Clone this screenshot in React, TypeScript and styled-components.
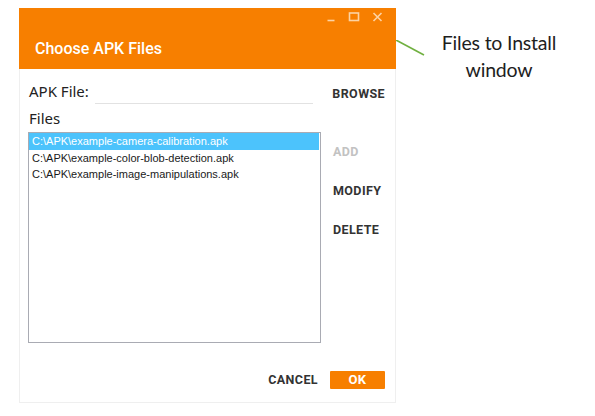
import React from "react";
import styled, { createGlobalStyle } from "styled-components";

const GlobalStyle = createGlobalStyle`
  html, body {
    margin: 0;
    padding: 0;
    background: #ffffff;
  }
  body {
    font-family: Roboto, "Liberation Sans", Arial, sans-serif;
  }
`;

const Page = styled.div`
  display: flex;
  align-items: flex-start;
  width: 595px;
  height: 416px;
  padding: 8px 0 0 19px;
  box-sizing: border-box;
`;

const Window = styled.div`
  width: 377px;
  display: flex;
  flex-direction: column;
  background: #ffffff;
  border: 1px solid #efefef;
  border-top: none;
  box-sizing: border-box;
`;

const Header = styled.div`
  height: 61px;
  background: #f77f00;
  display: flex;
  flex-direction: column;
  margin: 0 -1px;
`;

const Controls = styled.div`
  display: flex;
  justify-content: flex-end;
  align-items: center;
  gap: 12px;
  height: 14px;
  padding: 2px 13px 0 0;
`;

const Title = styled.div`
  margin-top: 15px;
  padding-left: 16px;
  color: #ffffff;
  font-size: 16px;
  font-weight: 500;
  line-height: 19px;
`;

const Body = styled.div`
  display: flex;
  flex-direction: column;
  padding: 0 10px 13px 8px;
`;

const FileRow = styled.div`
  display: flex;
  align-items: flex-end;
  height: 35px;
  padding-left: 1px;
`;

const FieldLabel = styled.span`
  width: 61px;
  font-family: "Noto Sans", "Open Sans", sans-serif;
  font-size: 15px;
  line-height: 18px;
  color: #222222;
  margin-bottom: 4px;
  white-space: nowrap;
`;

const TextInput = styled.div`
  width: 220px;
  height: 20px;
  margin-left: 5px;
  border-bottom: 1px solid #e2e2e2;
`;

const ActionButton = styled.span<{ $disabled?: boolean }>`
  font-size: 12.5px;
  font-weight: 700;
  line-height: 14px;
  letter-spacing: 0.4px;
  color: ${(p) => (p.$disabled ? "#c2c2c2" : "#333333")};
  cursor: ${(p) => (p.$disabled ? "default" : "pointer")};
`;

const BrowseButton = styled(ActionButton)`
  margin-left: 19px;
  margin-bottom: 3px;
`;

const SectionLabel = styled.div`
  margin-top: 5px;
  padding-left: 1px;
  font-family: "Noto Sans", "Open Sans", sans-serif;
  font-size: 15px;
  line-height: 18px;
  color: #222222;
`;

const ListRow = styled.div`
  display: flex;
  margin-top: 5px;
`;

const FileList = styled.ul`
  list-style: none;
  margin: 0;
  width: 293px;
  height: 211px;
  padding: 0 1px 0 0;
  box-sizing: border-box;
  border: 1px solid #a9abb3;
  font-family: "Liberation Sans", Arial, sans-serif;
  font-size: 11px;
`;

const FileItem = styled.li<{ $selected?: boolean }>`
  height: 16.5px;
  line-height: 16.5px;
  padding-left: 3px;
  white-space: nowrap;
  color: ${(p) => (p.$selected ? "#ffffff" : "#1a1a1a")};
  background: ${(p) => (p.$selected ? "#4cc3fc" : "transparent")};
`;

const SideButtons = styled.div`
  display: flex;
  flex-direction: column;
  gap: 25px;
  margin: 13px 0 0 12px;
`;

const Footer = styled.div`
  display: flex;
  justify-content: flex-end;
  align-items: center;
  gap: 12px;
  margin-top: 28px;
`;

const OkButton = styled.span`
  width: 55px;
  height: 18px;
  background: #f77f00;
  border-radius: 1px;
  color: #ffffff;
  font-size: 13px;
  font-weight: 700;
  line-height: 18px;
  text-align: center;
  letter-spacing: 0.4px;
`;

const Annotation = styled.div`
  display: flex;
  align-items: flex-start;
`;

const Connector = styled.svg`
  margin-top: 32px;
  flex-shrink: 0;
`;

const Note = styled.div`
  margin: 21px 0 0 14px;
  width: 120px;
  text-align: center;
  font-family: Lato, "Open Sans", sans-serif;
  font-size: 19.5px;
  line-height: 27px;
  color: #1e1e1e;
  letter-spacing: -0.2px;
`;

const files = [
  "C:\\APK\\example-camera-calibration.apk",
  "C:\\APK\\example-color-blob-detection.apk",
  "C:\\APK\\example-image-manipulations.apk",
];

const iconColor = "#fcd3a4";

function WindowControls() {
  return (
    <Controls>
      <svg width="10" height="10" viewBox="0 0 10 10">
        <line x1="1.5" y1="8.5" x2="8.5" y2="8.5" stroke={iconColor} strokeWidth="1.6" />
      </svg>
      <svg width="12" height="10" viewBox="0 0 12 10">
        <rect x="1.5" y="1" width="9" height="7.5" fill="none" stroke={iconColor} strokeWidth="1.6" />
      </svg>
      <svg width="11" height="10" viewBox="0 0 11 10">
        <path d="M1.5 1 L9.5 9 M9.5 1 L1.5 9" stroke={iconColor} strokeWidth="1.6" />
      </svg>
    </Controls>
  );
}

export default function App() {
  return (
    <>
      <GlobalStyle />
      <Page>
        <Window>
          <Header>
            <WindowControls />
            <Title>Choose APK Files</Title>
          </Header>
          <Body>
            <FileRow>
              <FieldLabel>APK File:</FieldLabel>
              <TextInput />
              <BrowseButton>BROWSE</BrowseButton>
            </FileRow>
            <SectionLabel>Files</SectionLabel>
            <ListRow>
              <FileList>
                {files.map((f, i) => (
                  <FileItem key={f} $selected={i === 0}>
                    {f}
                  </FileItem>
                ))}
              </FileList>
              <SideButtons>
                <ActionButton $disabled>ADD</ActionButton>
                <ActionButton>MODIFY</ActionButton>
                <ActionButton>DELETE</ActionButton>
              </SideButtons>
            </ListRow>
            <Footer>
              <ActionButton>CANCEL</ActionButton>
              <OkButton>OK</OkButton>
            </Footer>
          </Body>
        </Window>
        <Annotation>
          <Connector width="29" height="24" viewBox="0 0 29 24">
            <line x1="0" y1="0" x2="28" y2="15" stroke="#70b040" strokeWidth="1.6" />
          </Connector>
          <Note>
            Files to Install
            <br />
            window
          </Note>
        </Annotation>
      </Page>
    </>
  );
}
